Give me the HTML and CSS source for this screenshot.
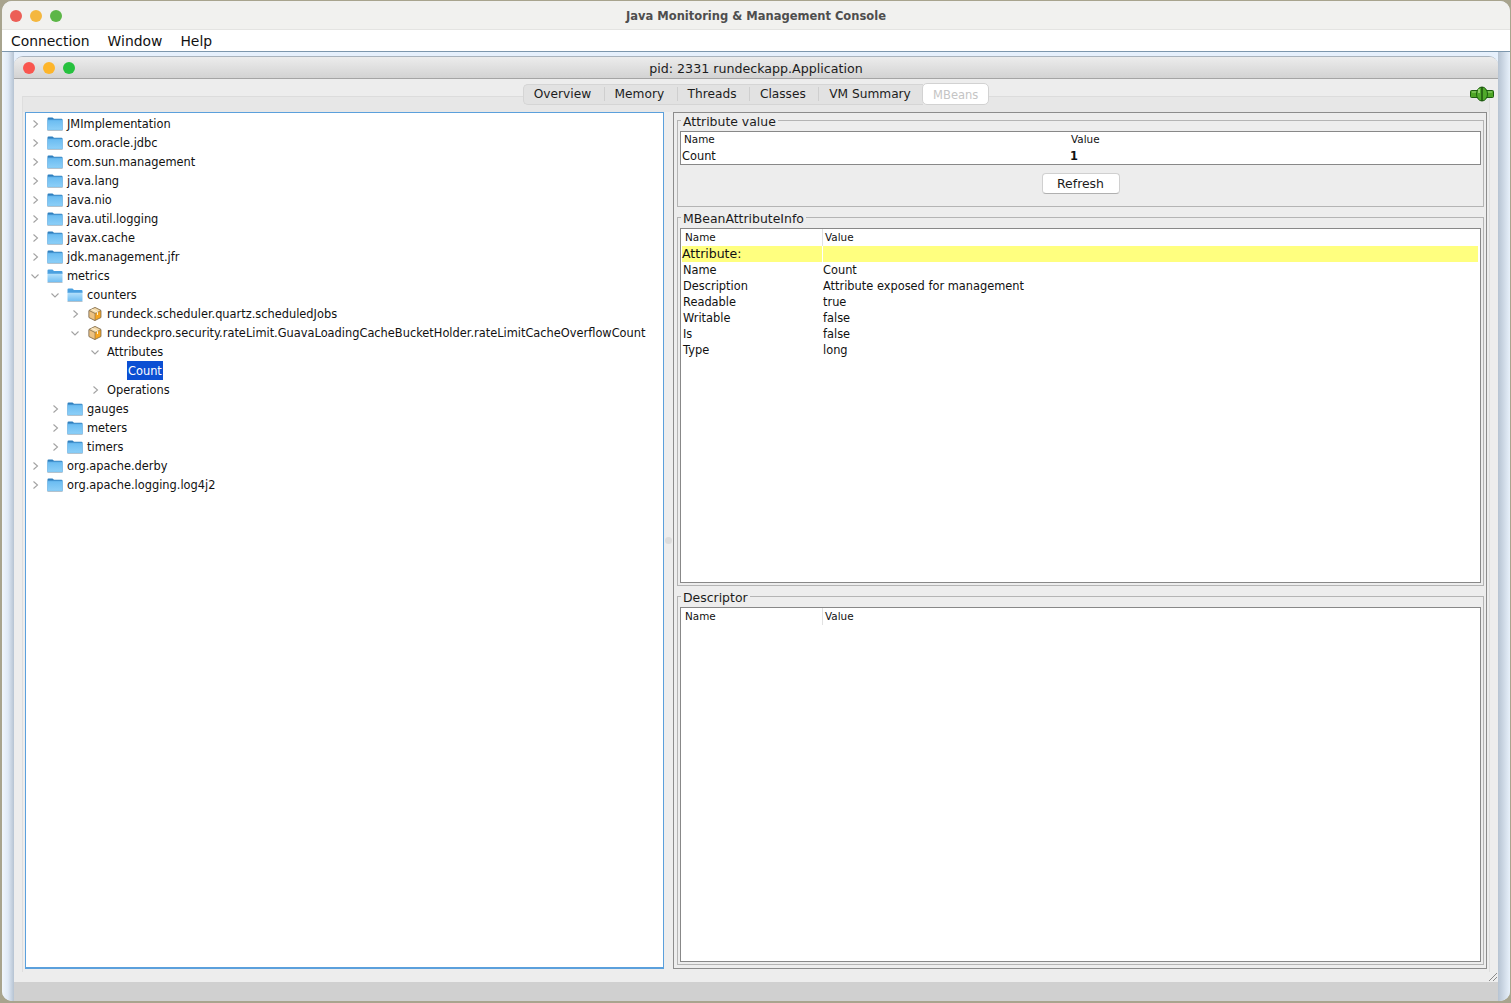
FILE: index.html
```html
<!DOCTYPE html>
<html lang="en">
<head>
    <meta charset="UTF-8">
    <title>Java Monitoring &amp; Management Console</title>
    <link rel="stylesheet" href="styles.css">
</head>
<body>

    <svg width="0" height="0" class="defs">
        <defs>
            <linearGradient id="folderBlue" x1="0" y1="0" x2="0" y2="1">
                <stop offset="0" stop-color="#69bbf1"/>
                <stop offset="1" stop-color="#8ed0f8"/>
            </linearGradient>
            <linearGradient id="folderOpen" x1="0" y1="0" x2="0" y2="1">
                <stop offset="0" stop-color="#b4e0fb"/>
                <stop offset="1" stop-color="#6fbdf2"/>
            </linearGradient>
            <symbol id="folder" viewBox="0 0 16 14">
                <path d="M.5 3V1.500q0-1 1-1h4l1.500 1.300h7.500q1 0 1 1V3z" fill="#2f7fbe"/>
                <rect x=".5" y="2.800" width="15" height="10.500" rx=".8" fill="url(#folderBlue)" stroke="#4f9fd8" stroke-width=".5"/>
                <rect x=".5" y="13" width="15" height="1" fill="#b4c2cd"/>
            </symbol>
            <symbol id="folder-open" viewBox="0 0 16 14">
                <path d="M.5 5V1.500q0-1 1-1h4L7 2h7.500q1 0 1 1v2z" fill="#4aa0e0"/>
                <path d="M.5 4.800h15v7.700q0 .8-1 .8h-13q-1 0-1-.8z" fill="url(#folderOpen)"/>
                <rect x=".5" y="13" width="15" height="1" fill="#b4c2cd"/>
            </symbol>
            <symbol id="bean" viewBox="0 0 14 14">
                <path d="M7 .5 13 3.500V10.500L7 13.500 1 10.500V3.500z" fill="#f5a623" stroke="#7c6a4e" stroke-width=".8"/>
                <path d="M7 .5 13 3.500 7 6.500 1 3.500z" fill="#f3d9a8" stroke="#7c6a4e" stroke-width=".6"/>
                <path d="M1 3.500 7 6.500V13.500L1 10.500z" fill="#ecc283" stroke="#7c6a4e" stroke-width=".6"/>
                <path d="M3.500 2.200 9.500 5.200V8" fill="none" stroke="#fff3d8" stroke-width="1"/>
            </symbol>
            <symbol id="chev-right" viewBox="0 0 10 10">
                <path d="M2.500 1.500 6.500 5 2.500 8.500" fill="none" stroke="#a2a2a2" stroke-width="1.100"/>
            </symbol>
            <symbol id="chev-down" viewBox="0 0 10 10">
                <path d="M.5 3.500 4 7 7.500 3.500" fill="none" stroke="#a2a2a2" stroke-width="1.100"/>
            </symbol>
        </defs>
    </svg>

    <div class="app-window">
        <div class="app-title">
            <div class="lights">
                <span class="light red"></span>
                <span class="light yellow"></span>
                <span class="light green"></span>
            </div>
            <span>Java Monitoring &amp; Management Console</span>
        </div>
        <div class="menu-bar">
            <span>Connection</span>
            <span>Window</span>
            <span>Help</span>
        </div>

        <div class="desktop">
            <div class="inner-window">
                <div class="inner-title">
                    <div class="lights">
                        <span class="light red"></span>
                        <span class="light yellow"></span>
                        <span class="light green"></span>
                    </div>
                    <span>pid: 2331 rundeckapp.Application</span>
                </div>

                <div class="content">
                    <div class="tabs">
                        <div class="tab-group">
                            <span class="tab">Overview</span>
                            <span class="tab">Memory</span>
                            <span class="tab">Threads</span>
                            <span class="tab">Classes</span>
                            <span class="tab">VM Summary</span>
                        </div>
                        <span class="tab-selected">MBeans</span>
                    </div>

                    <svg class="plug" width="24" height="16" viewBox="0 0 24 16">
                        <rect x=".5" y="4.500" width="23" height="7" rx="1" fill="#4ea626" stroke="#1d5e10"/>
                        <path d="M2 6H22" stroke="#9bd67a"/>
                        <ellipse cx="12" cy="8" rx="5.500" ry="7" fill="#4fa92a" stroke="#1d5e10"/>
                        <path d="M12 1V15" stroke="#123f0a" stroke-width="1.200"/>
                        <path d="M9 3V7" stroke="#a6dc84" stroke-width="1.500"/>
                    </svg>

                    <div class="tab-pane">
                        <div class="tree">
                            <div class="row"><svg class="chev"><use href="#chev-right"/></svg><svg class="folder"><use href="#folder"/></svg><span>JMImplementation</span></div>
                            <div class="row"><svg class="chev"><use href="#chev-right"/></svg><svg class="folder"><use href="#folder"/></svg><span>com.oracle.jdbc</span></div>
                            <div class="row"><svg class="chev"><use href="#chev-right"/></svg><svg class="folder"><use href="#folder"/></svg><span>com.sun.management</span></div>
                            <div class="row"><svg class="chev"><use href="#chev-right"/></svg><svg class="folder"><use href="#folder"/></svg><span>java.lang</span></div>
                            <div class="row"><svg class="chev"><use href="#chev-right"/></svg><svg class="folder"><use href="#folder"/></svg><span>java.nio</span></div>
                            <div class="row"><svg class="chev"><use href="#chev-right"/></svg><svg class="folder"><use href="#folder"/></svg><span>java.util.logging</span></div>
                            <div class="row"><svg class="chev"><use href="#chev-right"/></svg><svg class="folder"><use href="#folder"/></svg><span>javax.cache</span></div>
                            <div class="row"><svg class="chev"><use href="#chev-right"/></svg><svg class="folder"><use href="#folder"/></svg><span>jdk.management.jfr</span></div>
                            <div class="row"><svg class="chev"><use href="#chev-down"/></svg><svg class="folder"><use href="#folder-open"/></svg><span>metrics</span></div>
                            <div class="row level-1"><svg class="chev"><use href="#chev-down"/></svg><svg class="folder"><use href="#folder-open"/></svg><span>counters</span></div>
                            <div class="row level-2"><svg class="chev"><use href="#chev-right"/></svg><svg class="bean"><use href="#bean"/></svg><span>rundeck.scheduler.quartz.scheduledJobs</span></div>
                            <div class="row level-2"><svg class="chev"><use href="#chev-down"/></svg><svg class="bean"><use href="#bean"/></svg><span>rundeckpro.security.rateLimit.GuavaLoadingCacheBucketHolder.rateLimitCacheOverflowCount</span></div>
                            <div class="row level-3"><svg class="chev"><use href="#chev-down"/></svg><span>Attributes</span></div>
                            <div class="row level-4"><span class="selected">Count</span></div>
                            <div class="row level-3"><svg class="chev"><use href="#chev-right"/></svg><span>Operations</span></div>
                            <div class="row level-1"><svg class="chev"><use href="#chev-right"/></svg><svg class="folder"><use href="#folder"/></svg><span>gauges</span></div>
                            <div class="row level-1"><svg class="chev"><use href="#chev-right"/></svg><svg class="folder"><use href="#folder"/></svg><span>meters</span></div>
                            <div class="row level-1"><svg class="chev"><use href="#chev-right"/></svg><svg class="folder"><use href="#folder"/></svg><span>timers</span></div>
                            <div class="row"><svg class="chev"><use href="#chev-right"/></svg><svg class="folder"><use href="#folder"/></svg><span>org.apache.derby</span></div>
                            <div class="row"><svg class="chev"><use href="#chev-right"/></svg><svg class="folder"><use href="#folder"/></svg><span>org.apache.logging.log4j2</span></div>
                        </div>

                        <div class="splitter"><span class="grip"></span></div>

                        <div class="details">
                            <div class="group group-value">
                                <div class="group-title">Attribute value</div>
                                <div class="table">
                                    <div class="value-row head"><span>Name</span><span>Value</span></div>
                                    <div class="value-row"><span class="flush">Count</span><b>1</b></div>
                                </div>
                                <div class="actions"><button class="refresh">Refresh</button></div>
                            </div>

                            <div class="group group-info">
                                <div class="group-title">MBeanAttributeInfo</div>
                                <div class="table fill">
                                    <div class="info-row head"><span>Name</span><span class="col-value">Value</span></div>
                                    <div class="info-row highlight"><span>Attribute:</span><span class="col-white"></span></div>
                                    <div class="info-row"><span>Name</span><span>Count</span></div>
                                    <div class="info-row"><span>Description</span><span>Attribute exposed for management</span></div>
                                    <div class="info-row"><span>Readable</span><span>true</span></div>
                                    <div class="info-row"><span>Writable</span><span>false</span></div>
                                    <div class="info-row"><span>Is</span><span>false</span></div>
                                    <div class="info-row"><span>Type</span><span>long</span></div>
                                </div>
                            </div>

                            <div class="group group-descriptor">
                                <div class="group-title">Descriptor</div>
                                <div class="table fill">
                                    <div class="info-row head"><span>Name</span><span class="col-value">Value</span></div>
                                </div>
                            </div>
                        </div>
                    </div>

                    <div class="resize-grip"></div>
                </div>
                <div class="status-strip"></div>
            </div>
        </div>
    </div>

</body>
</html>
```

FILE: styles.css
```css
* {
    box-sizing: border-box;
}
html, body {
    height: 100%;
}
body {
    margin: 0;
    overflow: hidden;
    background-color: #a8a48e;
    font-family: "DejaVu Sans", Verdana, sans-serif;
    font-size: 11.4px;
    color: #111;
}
.defs {
    position: absolute;
}
.app-window {
    display: flex;
    flex-direction: column;
    height: 1000px;
    margin: 1px 1px 0 2px;
    border-radius: 10px;
    overflow: hidden;
    background-color: #e6f0fc;
}
.app-title {
    position: relative;
    height: 29px;
    padding-top: 1px;
    display: flex;
    align-items: center;
    justify-content: center;
    background: #f1f1ef;
    border-bottom: 1px solid #e4e4e2;
    font-size: 11.5px;
    font-weight: bold;
    color: #4e4e4e;
    flex-shrink: 0;
}
.lights {
    position: absolute;
    left: 8px;
    top: 9px;
    display: flex;
    gap: 8px;
}
.light {
    width: 12px;
    height: 12px;
    border-radius: 50%;
}
.red {
    background-color: #ec5f57;
}
.yellow {
    background-color: #f4b73f;
}
.green {
    background-color: #5cb647;
}
.menu-bar {
    height: 22px;
    display: flex;
    align-items: center;
    gap: 18px;
    padding-left: 9px;
    background-color: #fff;
    border-bottom: 1px solid #7d97ad;
    font-size: 13.9px;
    flex-shrink: 0;
}
.desktop {
    flex: 1;
    display: flex;
    min-height: 0;
    padding: 4px 12px 0 12px;
    background: linear-gradient(90deg, #f0f6fd 0, #dfe9f5 6px, #b6c3d2 12px, #e6f0fc 12px, #e6f0fc calc(100% - 12px), #b6c3d2 calc(100% - 12px), #e8f1fb 100%);
}
.inner-window {
    flex: 1;
    display: flex;
    flex-direction: column;
    min-width: 0;
    border-radius: 9px 9px 0 0;
    overflow: hidden;
    background-color: #ededed;
    border-top: 1px solid #a9b3bd;
}
.inner-title {
    position: relative;
    height: 22px;
    padding-top: 1px;
    display: flex;
    align-items: center;
    justify-content: center;
    background: linear-gradient(#ececec, #d3d3d3);
    border-bottom: 1px solid #a5a5a5;
    font-size: 12.65px;
    color: #1c1c1c;
    flex-shrink: 0;
}
.inner-title .lights {
    left: 9px;
    top: 5px;
}
.inner-title .red {
    background-color: #f9564f;
}
.inner-title .yellow {
    background-color: #fdb52b;
}
.inner-title .green {
    background-color: #26c13e;
}
.content {
    position: relative;
    flex: 1;
    display: flex;
    flex-direction: column;
    min-height: 0;
    padding: 4px 8px 10px 8px;
}
.tabs {
    position: relative;
    z-index: 1;
    display: flex;
    justify-content: center;
    align-items: center;
    height: 22px;
    flex-shrink: 0;
}
.tab-group {
    display: flex;
    align-items: center;
    height: 21px;
    margin-right: -1px;
    background-color: #e2e2e2;
    border: 1px solid #d5d5d5;
    border-right: none;
    border-radius: 5px 0 0 5px;
}
.tab {
    padding: 0 12.4px 0 10px;
    border-right: 1px solid #cfcfcf;
    font-size: 12.2px;
    line-height: 14px;
    color: #1c1c1c;
}
.tab:last-child {
    border-right: none;
}
.tab-selected {
    position: relative;
    width: 67px;
    height: 22px;
    line-height: 22px;
    text-align: center;
    background-color: #fff;
    border: 1px solid #d2d2d2;
    border-radius: 5px;
    font-size: 11.5px;
    color: #c4c4c4;
}
.plug {
    position: absolute;
    right: 4px;
    top: 7px;
    z-index: 2;
}
.tab-pane {
    flex: 1;
    display: flex;
    min-height: 0;
    margin-top: -9px;
    padding: 15px 2px 3px 2px;
    background: linear-gradient(#e7e7e7 0, #e7e7e7 15px, #ededed 15px);
    border-top: 1px solid #dcdcdc;
    border-left: 1px solid #dedede;
    border-right: 1px solid #dedede;
}
.tree {
    width: 639px;
    flex-shrink: 0;
    padding-top: 1px;
    background-color: #fff;
    border: 1px solid #5ba0dc;
    border-bottom-width: 2px;
}
.row {
    display: flex;
    align-items: center;
    height: 19px;
    padding-left: 5px;
    white-space: nowrap;
}
.level-1 {
    padding-left: 25px;
}
.level-2 {
    padding-left: 45px;
}
.level-3 {
    padding-left: 65px;
}
.level-4 {
    padding-left: 101px;
}
.chev {
    width: 10px;
    height: 10px;
    margin-right: 6px;
    flex-shrink: 0;
}
.folder {
    width: 16px;
    height: 14px;
    margin-right: 4px;
    flex-shrink: 0;
}
.bean {
    width: 14px;
    height: 14px;
    margin-right: 5px;
    margin-left: 1px;
    flex-shrink: 0;
}
.selected {
    display: block;
    height: 19px;
    line-height: 20px;
    padding: 0 1px;
    background-color: #0b4fd3;
    color: #fff;
}
.splitter {
    width: 9px;
    flex-shrink: 0;
    display: flex;
    align-items: center;
    justify-content: center;
}
.grip {
    width: 7px;
    height: 7px;
    border-radius: 50%;
    background-color: #dcdcdc;
}
.details {
    flex: 1;
    min-width: 0;
    display: flex;
    flex-direction: column;
    gap: 10px;
    padding: 7px 2px 3px 3px;
    border: 1px solid #8c8c8c;
}
.group {
    display: flex;
    flex-direction: column;
    min-width: 0;
    padding: 0 2px 2px 2px;
    border: 1px solid #b4b4b4;
    flex-shrink: 0;
}
.group-title {
    align-self: flex-start;
    height: 14px;
    margin: -6px 0 2px 1px;
    padding: 0 2px;
    background-color: #ededed;
    font-size: 12.45px;
    line-height: 14px;
    color: #1c1c1c;
}
.group-value {
    height: 87px;
}
.group-info {
    height: 369px;
}
.group-descriptor {
    flex: 1;
    min-height: 0;
}
.table {
    background-color: #fff;
    border: 1px solid #888;
}
.fill {
    flex: 1;
    padding: 0 2px 0 1px;
}
.value-row {
    display: grid;
    grid-template-columns: 390px 1fr;
    height: 16px;
    line-height: 16px;
}
.value-row.head {
    line-height: 14px;
}
.value-row span:first-child {
    padding-left: 3px;
}
.value-row span.flush:first-child {
    padding-left: 1px;
}
.value-row b {
    margin-left: -1px;
}
.head {
    font-size: 10.4px;
}
.info-row {
    display: grid;
    grid-template-columns: 141px 1fr;
    height: 16px;
    line-height: 16px;
}
.info-row.head {
    height: 17px;
}
.info-row span:first-child {
    padding-left: 1px;
}
.info-row.head span:first-child {
    padding-left: 3px;
}
.col-value {
    margin-left: -1px;
    padding-left: 2px;
    border-left: 1px solid #e2e2e2;
}
.highlight {
    background-color: #ffff7f;
    font-size: 12.5px;
}
.highlight span:first-child {
    padding-left: 0;
}
.col-white {
    margin-left: -1px;
    border-left: 1px solid #fff;
}
.actions {
    display: flex;
    justify-content: center;
    margin-top: 8px;
}
.refresh {
    width: 78px;
    height: 21px;
    padding: 0;
    background-color: #fff;
    border: 1px solid #d0d0d0;
    border-bottom-color: #b0b0b0;
    border-radius: 4px;
    font-family: inherit;
    font-size: 12.45px;
    color: #1c1c1c;
}
.resize-grip {
    position: absolute;
    right: 1px;
    bottom: 1px;
    width: 10px;
    height: 10px;
    background: repeating-linear-gradient(135deg, transparent 0, transparent 2px, #8a8a8a 2px, #8a8a8a 3px);
    clip-path: polygon(100% 0, 100% 100%, 0 100%);
}
.status-strip {
    height: 19px;
    background-color: #d0d0d0;
    flex-shrink: 0;
}
```
